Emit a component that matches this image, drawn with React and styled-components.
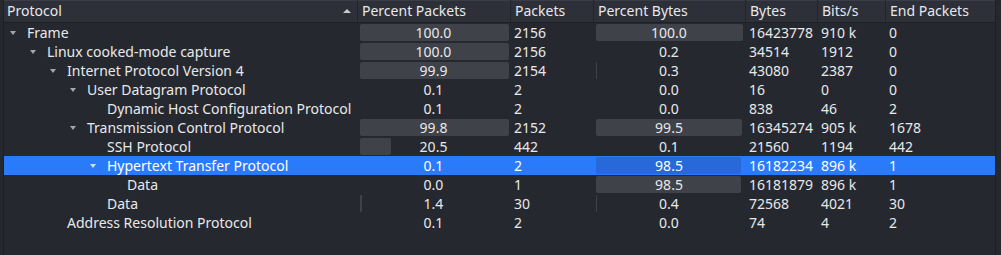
import React from "react";
import styled, { createGlobalStyle } from "styled-components";

const Global = createGlobalStyle`
  html, body { margin: 0; padding: 0; background: #262830; }
  body { font-family: "Noto Sans", "DejaVu Sans", sans-serif; font-size: 14px; color: #e8e8ea; }
`;

const COLS = "353px 153px 83px 152px 72px 68px 110px";

const Frame = styled.div`
  margin-left: 3px;
  width: 991px;
  height: 255px;
  border-left: 1px solid #1d1f25;
  border-right: 1px solid #1d1f25;
  background: #262830;
  overflow: hidden;
`;

const Header = styled.div`
  display: grid;
  grid-template-columns: ${COLS};
  height: 22px;
  background: #2d3039;
  border-bottom: 1px solid #1e2027;
  box-shadow: inset 0 1px 0 #3a3d46;
`;

const HeadCell = styled.div`
  position: relative;
  display: flex;
  align-items: center;
  padding-left: ${(p) => (p.$first ? 3 : 4)}px;
  border-left: ${(p) => (p.$first ? "none" : "1px solid #23252c")};
  line-height: 22px;
  white-space: nowrap;
`;

const SortArrow = styled.span`
  position: absolute;
  right: 6px;
  top: 9px;
  width: 0;
  height: 0;
  border-left: 4px solid transparent;
  border-right: 4px solid transparent;
  border-bottom: 4px solid #c9cacf;
`;

const Row = styled.div`
  display: grid;
  grid-template-columns: ${COLS};
  height: 19px;
  line-height: 19px;
  background: ${(p) => (p.$selected ? "#2a7bfb" : "transparent")};
  color: ${(p) => (p.$selected ? "#ffffff" : "#e8e8ea")};
`;

const TreeCell = styled.div`
  display: flex;
  align-items: center;
  padding-left: ${(p) => 3 + p.$level * 20}px;
  white-space: nowrap;
`;

const ArrowBox = styled.span`
  flex: 0 0 20px;
  height: 19px;
  display: flex;
  align-items: center;
  padding-left: 3px;
  box-sizing: border-box;
`;

const Tri = styled.span`
  width: 0;
  height: 0;
  border-left: 3.5px solid transparent;
  border-right: 3.5px solid transparent;
  border-top: 4px solid ${(p) => (p.$selected ? "#cfe0ff" : "#a5a7ae")};
`;

const Cell = styled.div`
  padding-left: 4px;
  white-space: nowrap;
`;

const PctCell = styled.div`
  position: relative;
  text-align: center;
  white-space: nowrap;
`;

const Bar = styled.div`
  position: absolute;
  left: 3px;
  top: 1px;
  height: 17px;
  border-radius: 2px;
  background: ${(p) => (p.$selected ? (p.$light ? "#3f8afa" : "#2769d8") : "#3f4249")};
`;

const PctText = styled.span`
  position: relative;
`;

const rows = [
  { name: "Frame", level: 0, exp: true, pp: "100.0", pk: "2156", pb: "100.0", by: "16423778", bits: "910 k", end: "0" },
  { name: "Linux cooked-mode capture", level: 1, exp: true, pp: "100.0", pk: "2156", pb: "0.2", by: "34514", bits: "1912", end: "0" },
  { name: "Internet Protocol Version 4", level: 2, exp: true, pp: "99.9", pk: "2154", pb: "0.3", by: "43080", bits: "2387", end: "0" },
  { name: "User Datagram Protocol", level: 3, exp: true, pp: "0.1", pk: "2", pb: "0.0", by: "16", bits: "0", end: "0" },
  { name: "Dynamic Host Configuration Protocol", level: 4, pp: "0.1", pk: "2", pb: "0.0", by: "838", bits: "46", end: "2" },
  { name: "Transmission Control Protocol", level: 3, exp: true, pp: "99.8", pk: "2152", pb: "99.5", by: "16345274", bits: "905 k", end: "1678" },
  { name: "SSH Protocol", level: 4, pp: "20.5", pk: "442", pb: "0.1", by: "21560", bits: "1194", end: "442" },
  { name: "Hypertext Transfer Protocol", level: 4, exp: true, sel: true, pp: "0.1", pk: "2", pb: "98.5", by: "16182234", bits: "896 k", end: "1" },
  { name: "Data", level: 5, pp: "0.0", pk: "1", pb: "98.5", by: "16181879", bits: "896 k", end: "1" },
  { name: "Data", level: 4, pp: "1.4", pk: "30", pb: "0.4", by: "72568", bits: "4021", end: "30" },
  { name: "Address Resolution Protocol", level: 2, pp: "0.1", pk: "2", pb: "0.0", by: "74", bits: "4", end: "2" },
];

function Pct({ value, span, selected, light }) {
  const w = (parseFloat(value) / 100) * span;
  return (
    <PctCell>
      {w > 0.3 && <Bar $selected={selected} $light={light} style={{ width: `${Math.max(1, Math.round(w))}px` }} />}
      <PctText>{value}</PctText>
    </PctCell>
  );
}

export default function App() {
  return (
    <>
      <Global />
      <Frame>
        <Header>
          <HeadCell $first>
            Protocol
            <SortArrow />
          </HeadCell>
          <HeadCell>Percent Packets</HeadCell>
          <HeadCell>Packets</HeadCell>
          <HeadCell>Percent Bytes</HeadCell>
          <HeadCell>Bytes</HeadCell>
          <HeadCell>Bits/s</HeadCell>
          <HeadCell>End Packets</HeadCell>
        </Header>
        {rows.map((r, i) => (
          <Row key={i} $selected={r.sel}>
            <TreeCell $level={r.level}>
              <ArrowBox>{r.exp && <Tri $selected={r.sel} />}</ArrowBox>
              {r.name}
            </TreeCell>
            <Pct value={r.pp} span={149} selected={r.sel} light />
            <Cell>{r.pk}</Cell>
            <Pct value={r.pb} span={147} selected={r.sel} />
            <Cell>{r.by}</Cell>
            <Cell>{r.bits}</Cell>
            <Cell>{r.end}</Cell>
          </Row>
        ))}
      </Frame>
    </>
  );
}
